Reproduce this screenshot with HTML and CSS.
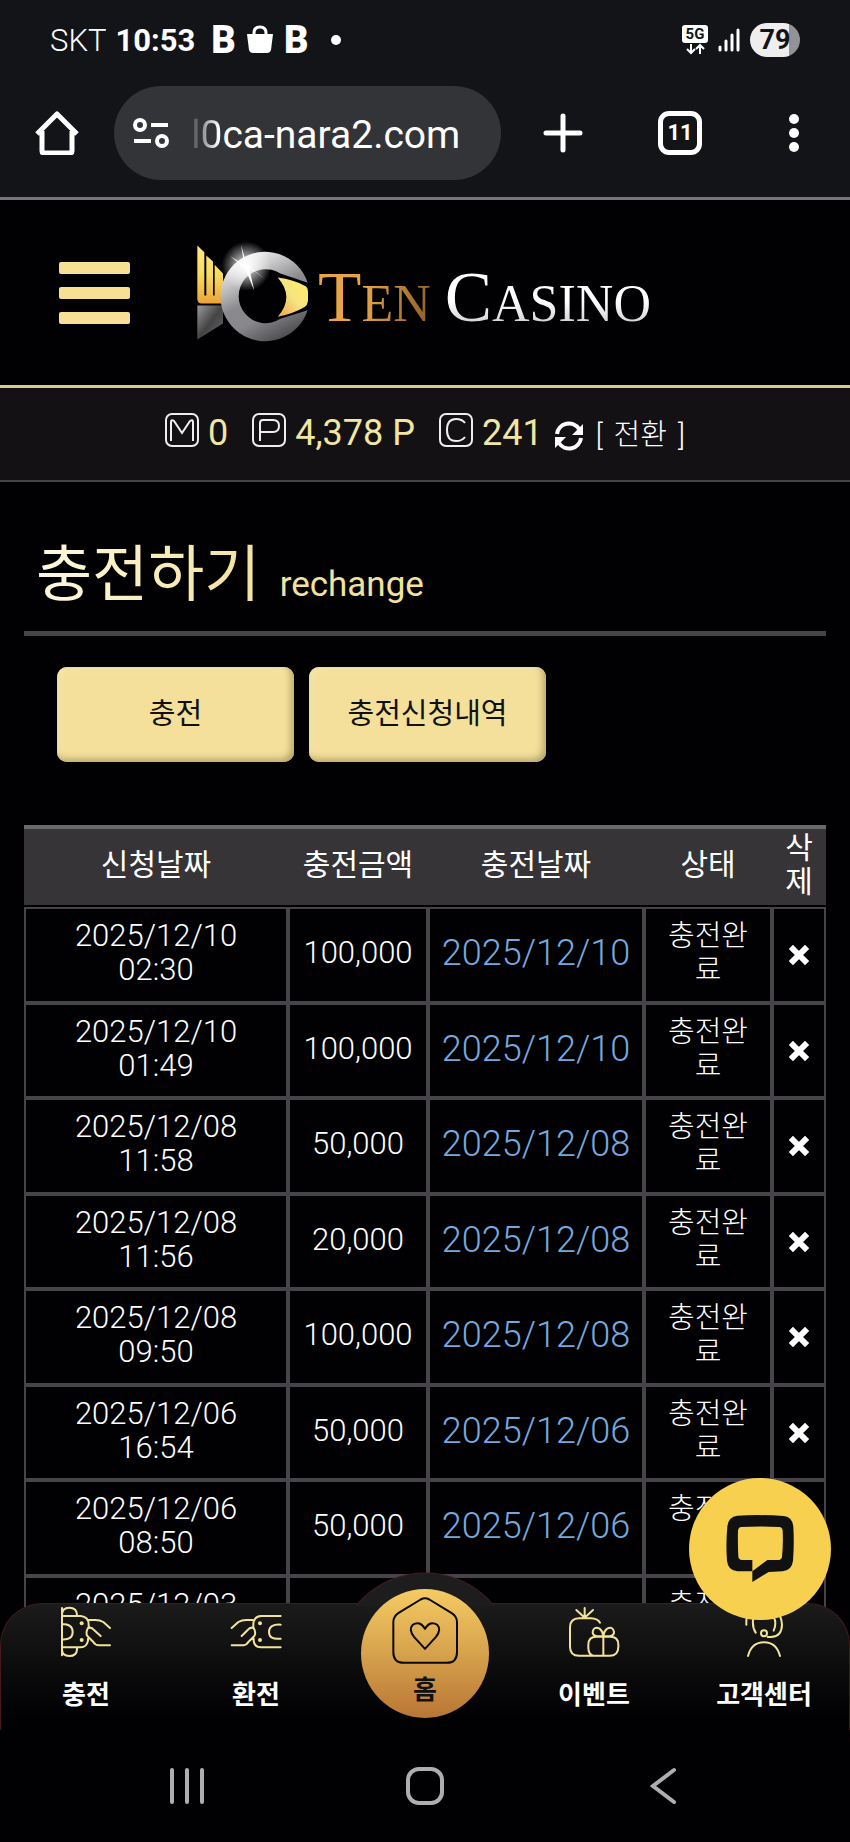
FILE: index.html
```html
<!DOCTYPE html>
<html lang="ko">
<head>
<meta charset="utf-8">
<meta name="viewport" content="width=device-width, initial-scale=1">
<title>Ten Casino - 충전하기</title>
<link rel="stylesheet" href="styles.css">
</head>
<body>
<svg class="defs" aria-hidden="true">
  <symbol id="x" viewBox="0 0 20 20"><path d="M4 4 16 16M16 4 4 16" stroke="#fff" stroke-width="6" stroke-linecap="square"/></symbol>
</svg>

<div class="status">
  <span class="carrier">SKT</span>
  <span class="clock">10:53</span>
  <span class="app">B</span>
  <svg class="bag" viewBox="0 0 28 30"><path d="M1 9h26l-2 16q-1 3-4 3H7q-3 0-4-3z" fill="#fff"/><path d="M8 13V8q0-6 6-6t6 6v5" fill="none" stroke="#fff" stroke-width="3"/></svg>
  <span class="app">B</span>
  <span class="dot"></span>
  <span class="status-right">
    <svg width="26" height="30" viewBox="0 0 26 30"><rect width="26" height="18" rx="3" fill="#fff"/><text x="13" y="14" class="fiveg" text-anchor="middle">5G</text><path d="M9 19v9M5 24l4 4 4-4M18 29v-9M14 24l4-4 4 4" fill="none" stroke="#fff" stroke-width="2"/></svg>
    <svg width="22" height="24" viewBox="0 0 22 24"><path d="M2 19v3M8 13v9M14 7v15M20 2v20" stroke="#fff" stroke-width="3" stroke-linecap="round"/></svg>
    <span class="battery">79</span>
  </span>
</div>

<div class="browser">
  <button class="tool" aria-label="홈"><svg width="44" height="44" viewBox="0 0 44 44"><path d="M2 23 22 3l20 20M7 20v20q0 2 2 2h26q2 0 2-2V20" fill="none" stroke="#fff" stroke-width="5" stroke-linejoin="round"/></svg></button>
  <div class="url">
    <svg width="36" height="30" viewBox="0 0 36 30" fill="none" stroke="#fff" stroke-width="4"><circle cx="7" cy="7" r="5"/><path d="M18 7h17M1 23h17"/><circle cx="29" cy="23" r="5"/></svg>
    <span class="address"><span class="fade">l0</span>ca-nara2.com</span>
  </div>
  <button class="tool plus" aria-label="새 탭"><svg width="40" height="40" viewBox="0 0 40 40"><path d="M20 3v34M3 20h34" stroke="#fff" stroke-width="5" stroke-linecap="round"/></svg></button>
  <button class="tool tabs">11</button>
  <button class="tool" aria-label="메뉴"><svg width="12" height="40" viewBox="0 0 12 40" fill="#fff"><circle cx="6" cy="6" r="5"/><circle cx="6" cy="20" r="5"/><circle cx="6" cy="34" r="5"/></svg></button>
</div>

<div class="view">
  <header class="top">
    <button class="burger" aria-label="메뉴"><i></i><i></i><i></i></button>
    <a class="brand" href="#">
      <svg class="mark" viewBox="590 110 336 320">
        <defs>
          <linearGradient id="gold" x1="0" y1="0" x2="0" y2="1"><stop offset="0" stop-color="#ffe98a"/><stop offset=".5" stop-color="#f7dc5f"/><stop offset="1" stop-color="#eda23a"/></linearGradient>
          <linearGradient id="eye" x1="1" y1="0" x2="0" y2="1"><stop offset="0" stop-color="#ffee60"/><stop offset=".5" stop-color="#f6e482"/><stop offset="1" stop-color="#eda742"/></linearGradient>
          <linearGradient id="steel" x1=".2" y1="0" x2=".7" y2="1"><stop offset="0" stop-color="#fff"/><stop offset=".25" stop-color="#c8c8ca"/><stop offset=".5" stop-color="#8a8a8e"/><stop offset=".7" stop-color="#88888c"/><stop offset="1" stop-color="#4a4a4d"/></linearGradient>
          <linearGradient id="dark" x1="0" y1="0" x2="1" y2="1"><stop offset="0" stop-color="#9a9a9c"/><stop offset=".5" stop-color="#444"/><stop offset="1" stop-color="#666"/></linearGradient>
          <radialGradient id="glow"><stop offset="0" stop-color="#fff"/><stop offset=".3" stop-color="#fff" stop-opacity=".7"/><stop offset="1" stop-color="#fff" stop-opacity="0"/></radialGradient>
        </defs>
        <path d="M591 138 612 158V288H618V168L638 186V288H643V196L668 222V312H602Q591 310 591 298Z" fill="url(#gold)"/>
        <path d="M591 318H668V372L591 420Z" fill="url(#dark)"/>
        <path d="M922 250A134 134 0 1 0 922 332L840 358A81 81 0 1 1 840 222Z" fill="url(#steel)"/>
        <path d="M832 234Q880 240 916 260Q923 264 923 280V300Q923 318 910 324Q880 342 832 352Q884 292 832 234Z" fill="url(#eye)"/>
        <circle cx="738" cy="200" r="74" fill="url(#glow)"/>
        <path d="M722 136 739 196 796 240 746 204 762 274 734 206 690 170 732 196Z" fill="#fff"/>
      </svg>
      <span class="name"><span class="ten">T<small>EN</small></span><span class="casino">C<small>ASINO</small></span></span>
    </a>
  </header>

  <div class="wallet">
    <svg class="coin" viewBox="0 0 34 34"><rect x="1" y="1" width="32" height="32" rx="6"/><path d="M6 28V9q0-3 3-1l8 12 8-12q3-2 3 1v19"/></svg><b>0</b>
    <svg class="coin gap" viewBox="0 0 34 34"><rect x="1" y="1" width="32" height="32" rx="6"/><path d="M8 28V10q0-3 3-3h10q6 0 6 6t-6 6H8"/></svg><b>4,378 P</b>
    <svg class="coin gap" viewBox="0 0 34 34"><rect x="1" y="1" width="32" height="32" rx="6"/><path d="M26 10q-3-4-9-4-9 0-9 11t9 11q6 0 9-4"/></svg><b>241</b>
    <svg class="sync" viewBox="0 0 30 30"><path d="M3 13A12 12 0 0 1 25 8M27 17A12 12 0 0 1 5 22" fill="none" stroke="#fff" stroke-width="4"/><path d="M29 3v11H18zM1 27V16h11z" fill="#fff"/></svg>
    <a class="convert" href="#"><span>[</span><span>전환</span><span>]</span></a>
  </div>

  <main>
    <h1><span>충전하기</span> <small>rechange</small></h1>
    <div class="actions"><button>충전</button><button>충전신청내역</button></div>
    <table>
      <colgroup><col><col class="c2"><col class="c3"><col class="c4"><col class="c5"></colgroup>
      <thead><tr><th>신청날짜</th><th>충전금액</th><th>충전날짜</th><th>상태</th><th>삭제</th></tr></thead>
      <tbody>
        <tr><td>2025/12/10<br>02:30</td><td>100,000</td><td class="date">2025/12/10</td><td class="state">충전완료</td><td><button aria-label="삭제"><svg><use href="#x"/></svg></button></td></tr>
        <tr><td>2025/12/10<br>01:49</td><td>100,000</td><td class="date">2025/12/10</td><td class="state">충전완료</td><td><button aria-label="삭제"><svg><use href="#x"/></svg></button></td></tr>
        <tr><td>2025/12/08<br>11:58</td><td>50,000</td><td class="date">2025/12/08</td><td class="state">충전완료</td><td><button aria-label="삭제"><svg><use href="#x"/></svg></button></td></tr>
        <tr><td>2025/12/08<br>11:56</td><td>20,000</td><td class="date">2025/12/08</td><td class="state">충전완료</td><td><button aria-label="삭제"><svg><use href="#x"/></svg></button></td></tr>
        <tr><td>2025/12/08<br>09:50</td><td>100,000</td><td class="date">2025/12/08</td><td class="state">충전완료</td><td><button aria-label="삭제"><svg><use href="#x"/></svg></button></td></tr>
        <tr><td>2025/12/06<br>16:54</td><td>50,000</td><td class="date">2025/12/06</td><td class="state">충전완료</td><td><button aria-label="삭제"><svg><use href="#x"/></svg></button></td></tr>
        <tr><td>2025/12/06<br>08:50</td><td>50,000</td><td class="date">2025/12/06</td><td class="state">충전완료</td><td><button aria-label="삭제"><svg><use href="#x"/></svg></button></td></tr>
        <tr><td>2025/12/03<br>&nbsp;</td><td></td><td></td><td class="state">충전완료</td><td></td></tr>
      </tbody>
    </table>
  </main>

  <nav class="dock">
    <a href="#"><svg viewBox="178 200 156 156"><path d="M184 348V206M184 232V226Q184 205 206 205T229 226V230M184 322V330Q184 350 206 350T229 330V326M184 230H240Q264 232 264 256V262M184 324H240Q258 324 262 304V298M184 254Q216 254 216 278T184 300M264 242H284Q298 242 308 248L328 266M328 318H294Q284 318 278 308L260 290Q254 280 262 266 272 262 280 272L300 290"/><circle class="pip" cx="243" cy="252" r="6"/><circle class="pip" cx="243" cy="302" r="6"/></svg><span>충전</span></a>
    <a href="#"><svg viewBox="687 200 156 156"><path d="M839 230H780Q757 232 757 256V262M839 324H780Q760 324 758 304V298M839 256Q804 254 804 278T839 298M755 242H736Q722 242 712 248L692 266M692 318H726Q736 318 742 308L760 290Q766 280 758 266 748 262 740 272L722 290"/><circle class="pip" cx="777" cy="252" r="6"/><circle class="pip" cx="777" cy="302" r="6"/></svg><span>환전</span></a>
    <a href="#" class="home"><svg viewBox="1170 170 210 206"><path d="M1262 180Q1275 173 1288 180L1354 220Q1371 230 1371 248V338Q1371 370 1340 370H1212Q1180 370 1180 338V248Q1180 230 1196 220ZM1275 328 1242 292Q1225 270 1238 256 1260 242 1275 268 1290 242 1312 256 1325 270 1308 292Z"/></svg><span>홈</span></a>
    <a href="#"><svg viewBox="447 440 156 156"><path d="M543 490Q536 478 516 477H480Q453 478 453 504V562Q453 589 480 589H572Q598 589 598 562V556Q598 532 574 532H532Q508 532 508 556V566Q508 584 522 589M553 532V589M553 530Q520 534 521 518 524 500 542 508 552 516 553 530ZM553 530Q586 534 585 518 582 500 564 508 554 516 553 530ZM497 475V446M497 475 472 452M497 475 522 452"/></svg><span>이벤트</span></a>
    <a href="#"><svg viewBox="957 440 156 156"><path d="M987 590Q998 549 1035 549T1083 590M982 496V484Q984 446 1035 446T1089 496Q1088 532 1056 533H1046M1010 520Q1000 505 1002 482 1012 460 1035 460T1068 482Q1071 500 1064 514"/><circle cx="1035" cy="522" r="9"/></svg><span>고객센터</span></a>
  </nav>
  <button class="chat" aria-label="상담"><svg viewBox="915 170 210 210"><path fill="#111" fill-rule="evenodd" d="M952 175Q1020 171 1090 176 1117 178 1120 208 1123 260 1119 310 1116 338 1088 342L1046 344 997 374V342H952Q924 339 921 310 917 260 922 208 925 178 952 175ZM964 209Q1020 206 1078 209 1087 210 1088 220 1090 260 1086 298 1085 307 1076 308H1042L997 342V308H966Q956 307 955 298 953 260 954 220 955 210 964 209Z"/></svg></button>
</div>

<div class="system">
  <button aria-label="최근 앱"><svg viewBox="0 0 38 38"><path d="M4 3v32M19 3v32M34 3v32"/></svg></button>
  <button aria-label="홈"><svg viewBox="0 0 38 38"><rect x="2" y="2" width="34" height="34" rx="11"/></svg></button>
  <button aria-label="뒤로"><svg viewBox="0 0 38 38"><path d="M30 3 9 19 30 35"/></svg></button>
</div>
</body>
</html>
```
FILE: styles.css
```css
* { box-sizing: border-box; }
body {
  margin: 0;
  height: 100vh;
  display: flex;
  flex-direction: column;
  background: #010002;
  color: #fff;
  font-family: Roboto, "Noto Sans CJK KR", sans-serif;
}
button {
  padding: 0;
  border: 0;
  background: none;
  color: inherit;
  font: inherit;
}
a { color: inherit; text-decoration: none; }
.defs { position: absolute; width: 0; height: 0; }

.status {
  display: flex;
  align-items: center;
  height: 80px;
  padding: 0 50px;
  background: #131418;
  font-size: 31px;
}
.carrier { font-weight: 300; }
.clock { margin: 0 16px 0 9px; font-weight: 700; }
.app { font-size: 38px; font-weight: 900; line-height: 40px; }
.bag { width: 28px; height: 30px; margin: 0 10px; }
.dot { width: 10px; height: 10px; margin-left: 23px; border-radius: 50%; background: #fff; }
.status-right { display: flex; align-items: center; gap: 10px; margin-left: auto; }
.fiveg { font-size: 15px; font-weight: 700; fill: #131418; }
.battery {
  width: 50px;
  border-radius: 17px;
  background: linear-gradient(90deg, #eee 78%, #939396 78%);
  color: #131418;
  font-size: 27px;
  font-weight: 700;
  line-height: 34px;
  text-align: center;
}

.browser {
  display: flex;
  align-items: center;
  height: 120px;
  padding: 0 50px 12px 35px;
  border-bottom: 3px solid #77757a;
  background: #131418;
}
.tool { display: flex; }
.url {
  display: flex;
  align-items: center;
  gap: 22px;
  width: 387px;
  height: 94px;
  margin-left: 35px;
  padding-left: 19px;
  border-radius: 47px;
  background: #333438;
}
.address { padding-top: 4px; font-size: 39px; line-height: 48px; }
.fade { background: linear-gradient(90deg, #44454a, #fff 90%); background-clip: text; color: transparent; }
.plus { margin-left: 42px; }
.tabs {
  justify-content: center;
  width: 44px;
  margin: 0 auto 0 75px;
  border: 5px solid #fff;
  border-radius: 11px;
  font-size: 22px;
  font-weight: 700;
  line-height: 34px;
}

.view { position: relative; flex: 1; min-height: 0; overflow: hidden; }
.top {
  display: flex;
  align-items: center;
  height: 188px;
  padding-left: 59px;
  border-bottom: 3px solid #d9cb92;
}
.burger { display: flex; flex-direction: column; gap: 13px; width: 71px; }
.burger i { height: 12px; border-radius: 2px; background: #f7df94; }
.brand { display: flex; align-items: center; margin-left: 67px; }
.mark { width: 112px; height: 107px; margin-top: -6px; }
.name {
  display: flex;
  gap: 14px;
  padding: 16px 0 0 9px;
  font-family: "Liberation Serif", serif;
  font-size: 71px;
  line-height: 80px;
}
.name small { font-size: 52px; }
.ten { background: linear-gradient(100deg, #e8a545 40%, #8a5a22); background-clip: text; color: transparent; }
.casino { background: linear-gradient(#fff 50%, #aaa6ac); background-clip: text; color: transparent; }

.wallet {
  display: flex;
  align-items: center;
  justify-content: center;
  height: 94px;
  padding-bottom: 4px;
  border-bottom: 2px solid #454346;
  background: #131114;
}
.wallet b { margin-left: 9px; padding-top: 2px; color: #f2e6a0; font-size: 36px; font-weight: 400; }
.coin { width: 34px; height: 34px; margin-bottom: 4px; fill: none; stroke: #eee; stroke-width: 2; }
.gap { margin-left: 24px; }
.sync { width: 30px; height: 30px; margin: 8px 12px 0 11px; }
.convert { display: flex; align-items: baseline; gap: 11px; font-size: 29px; font-weight: 300; }

main { padding: 0 24px; }
h1 {
  margin: 0 0 31px;
  padding: 47px 0 9px 12px;
  border-bottom: 5px solid #464448;
  font-size: 61px;
  font-weight: 400;
  line-height: 93px;
}
h1 span { background: linear-gradient(90deg, #fff8e0, #f2e29c); background-clip: text; color: transparent; }
h1 small { margin-left: 4px; color: #f2e29c; font-size: 35px; line-height: 35px; }
.actions { display: flex; gap: 15px; margin-bottom: 63px; padding-left: 33px; }
.actions button {
  width: 237px;
  height: 95px;
  padding-bottom: 8px;
  border-radius: 10px;
  background: #f4e09a;
  box-shadow: inset -3px -3px 7px #b5a46a, inset 2px 2px 5px #f9edbb;
  color: #111;
  font-size: 29px;
}

table {
  width: 100%;
  border-collapse: separate;
  border-spacing: 0;
  table-layout: fixed;
  text-align: center;
}
.c2 { width: 140px; }
.c3 { width: 216px; }
.c4 { width: 128px; }
.c5 { width: 54px; }
th {
  height: 82px;
  padding: 0 8px 4px;
  border-top: 4px solid #6b686d;
  border-bottom: 2px solid #010002;
  background: #363437;
  font-size: 30px;
  font-weight: 400;
  line-height: 34px;
}
td {
  height: 96px;
  padding: 0 0 4px;
  border: 2px solid #464448;
  font-size: 31px;
  font-weight: 300;
  line-height: 34px;
}
tr:nth-child(even) td { height: 95px; }
td.date { color: #74a9df; font-size: 36px; }
td.state { padding: 0 16px 4px; font-size: 29px; }
td button { display: flex; margin: 4px auto 0; }
td svg { width: 20px; height: 20px; }

.dock {
  position: absolute;
  inset: auto 0 0;
  z-index: 1;
  display: flex;
  height: 127px;
  border: 1px solid #46191c;
  border-bottom: 0;
  border-radius: 42px 42px 0 0;
  background: linear-gradient(#1b1b1b, #010002 90%);
}
.dock::before {
  content: "";
  position: absolute;
  top: -32px;
  left: 50%;
  z-index: -1;
  width: 180px;
  height: 34px;
  margin-left: -90px;
  background: radial-gradient(circle at 50% 90px, #1d1d1d 88px, #46191c 89px, transparent 90px);
}
.dock a {
  display: flex;
  flex: 1;
  flex-direction: column;
  align-items: center;
  justify-content: space-between;
  padding: 2px 0 16px;
  font-size: 26px;
  font-weight: 700;
  line-height: 38px;
}
.dock svg { width: 52px; height: 52px; fill: none; stroke: #f2e39c; stroke-width: 6; stroke-linecap: round; stroke-linejoin: round; }
.dock .pip { fill: #f2e39c; stroke: none; }
.dock .home {
  flex: none;
  width: 128px;
  height: 129px;
  margin: -15px 20px 0;
  padding: 7px 0 9px;
  border-radius: 50%;
  background: linear-gradient(#f5cb63, #d6a24c 50%, #b97635);
  color: #111;
}
.dock .home svg { width: 70px; height: 69px; stroke: #0b0805; }

.chat {
  position: absolute;
  right: 19px;
  bottom: 110px;
  z-index: 2;
  display: flex;
  align-items: center;
  justify-content: center;
  width: 142px;
  height: 142px;
  border-radius: 50%;
  background: #f7d04f;
}
.chat svg { width: 70px; height: 70px; }

.system {
  display: flex;
  justify-content: center;
  gap: 200px;
  height: 112px;
  padding-top: 4px;
}
.system svg { width: 38px; height: 38px; fill: none; stroke: #b0adb2; stroke-width: 4; stroke-linecap: round; }
```
